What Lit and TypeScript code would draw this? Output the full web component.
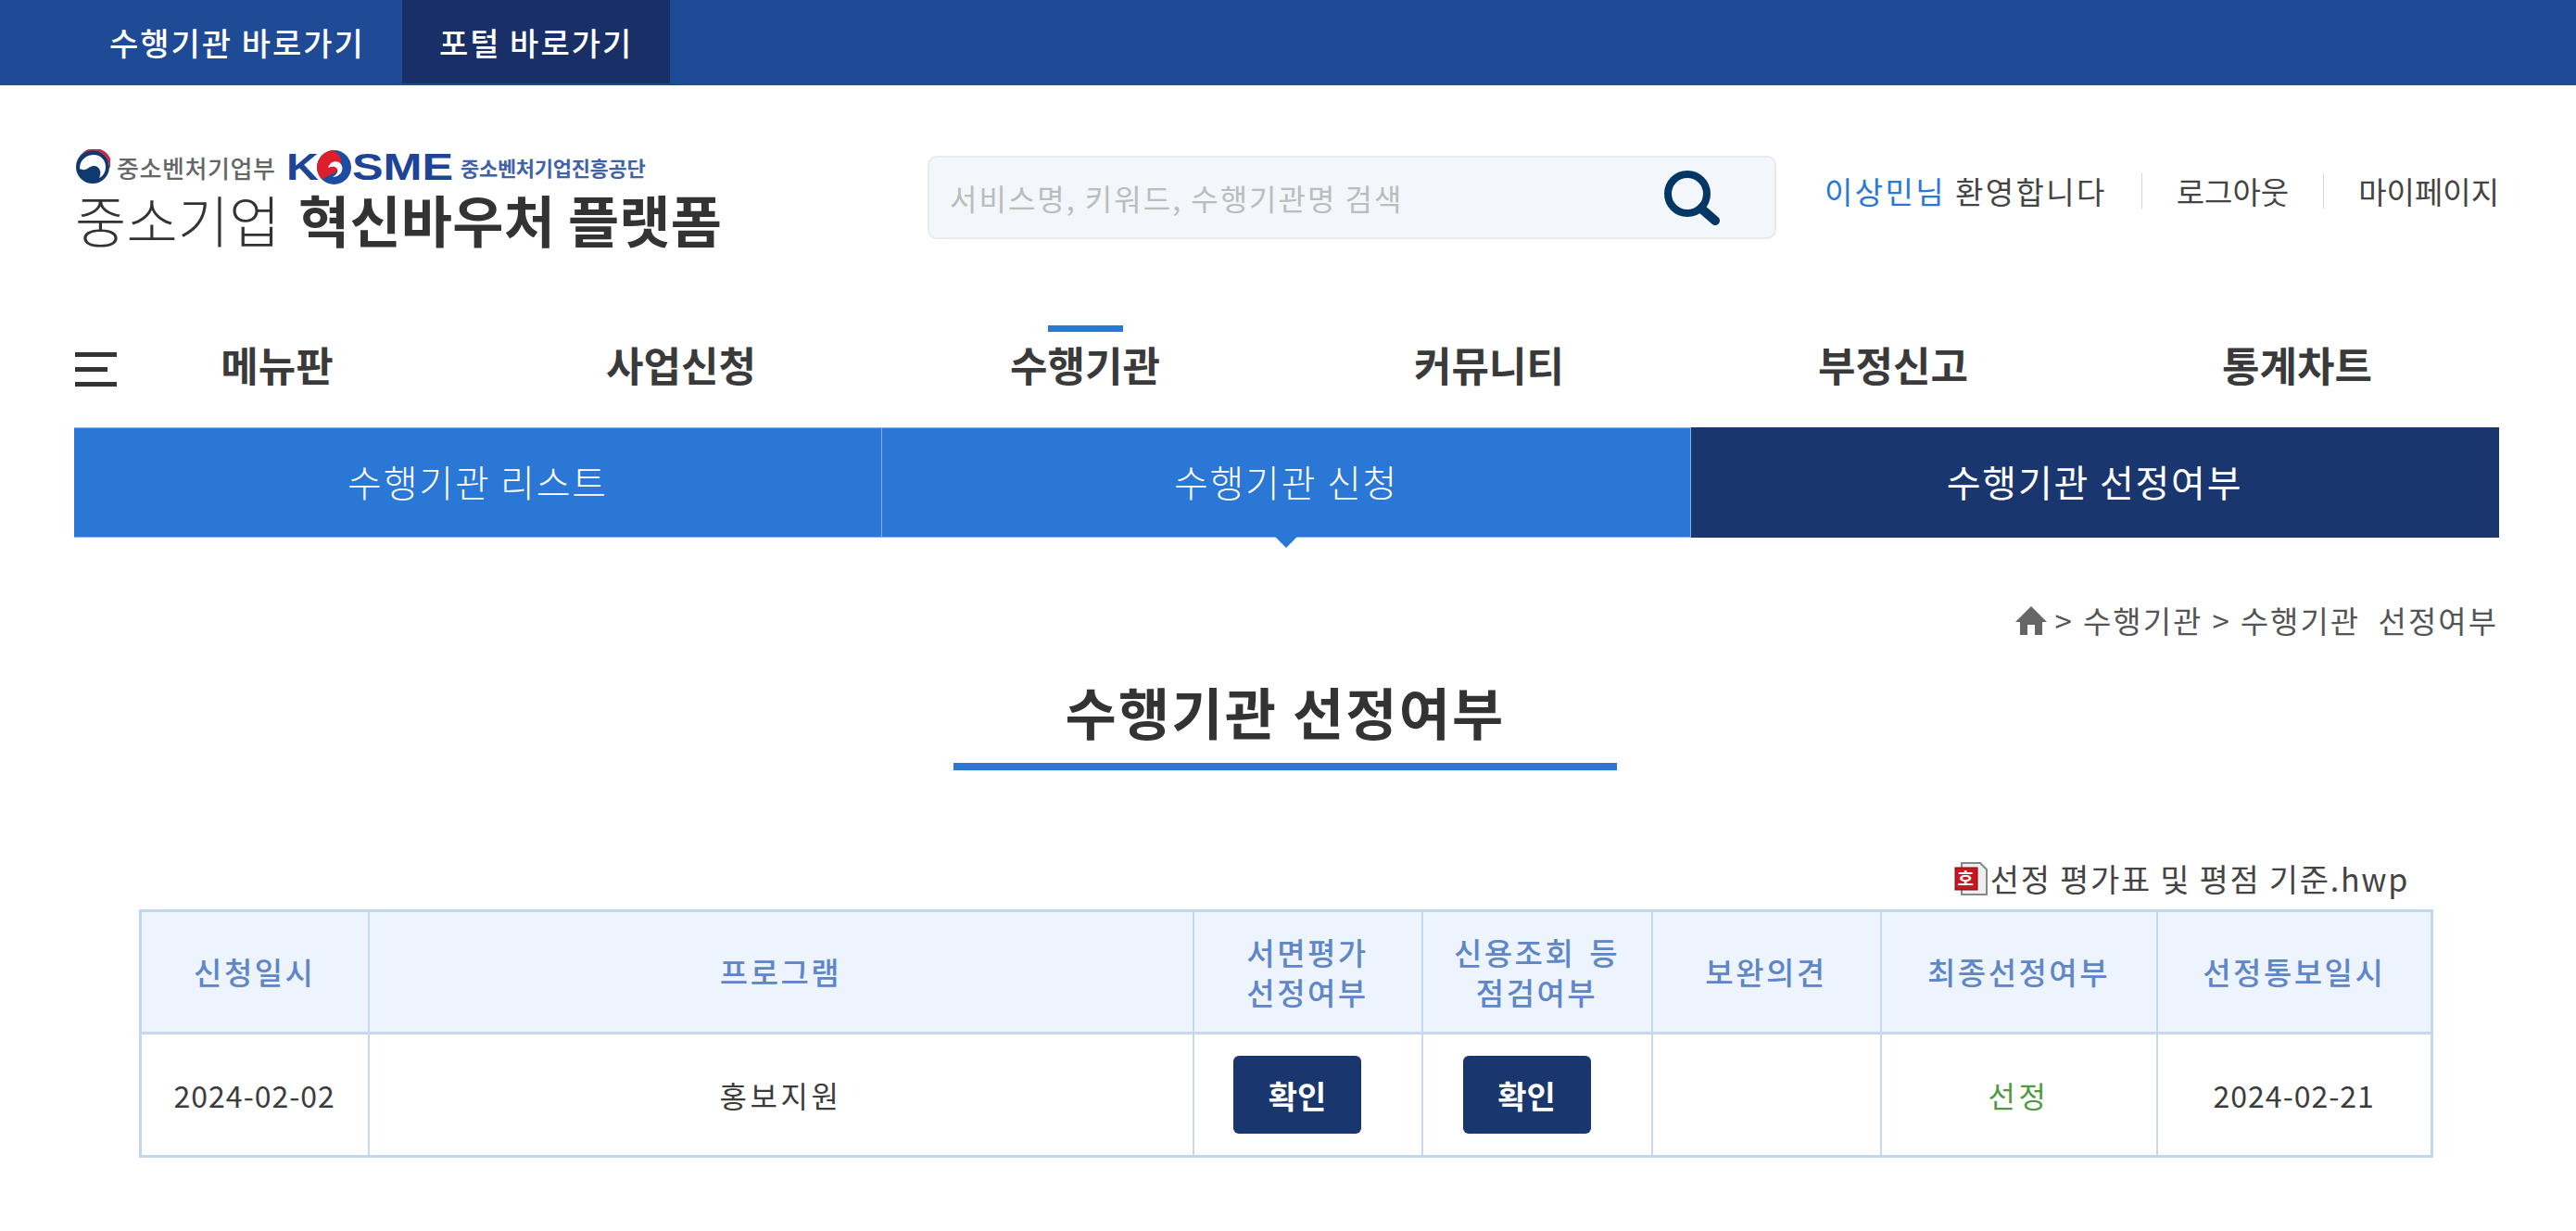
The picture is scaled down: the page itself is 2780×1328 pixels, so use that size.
import { LitElement, css, html } from "lit";
import { customElement } from "lit/decorators.js";

const NAV = ["메뉴판", "사업신청", "수행기관", "커뮤니티", "부정신고", "통계차트"];
const HEADS = ["신청일시", "프로그램", "서면평가<br>선정여부", "신용조회 등<br>점검여부", "보완의견", "최종선정여부", "선정통보일시"];
const COLS = [246, 890, 247, 248, 247, 298, 297];

@customElement("app-root")
export class AppRoot extends LitElement {
  static styles = css`
    :host {
      display: block;
      width: 2780px;
      height: 1328px;
      overflow: hidden;
      background: #fff;
      color: #333;
      font-family: "Noto Sans CJK KR", "Noto Sans", sans-serif;
    }
    .topbar {
      display: flex;
      height: 92px;
      padding-left: 78px;
      background: #1e4a96;
      box-sizing: border-box;
    }
    .topbar a {
      display: flex;
      align-items: center;
      height: 90px;
      padding: 0 40px;
      color: #fff;
      font-size: 34px;
      letter-spacing: 2px;
      font-weight: 500;
    }
    .topbar a.on {
      background: #182f67;
    }
    .head {
      display: flex;
      height: 228px;
      padding: 68px 83px 0 81px;
      box-sizing: border-box;
    }
    .logo {
      width: 920px;
      flex: none;
    }
    .orgs {
      display: flex;
      align-items: center;
      height: 40px;
    }
    .orgs .min {
      margin-left: 7px;
      font-size: 26px;
      letter-spacing: 0.6px;
      color: #666;
      font-weight: 500;
      width: 183px;
    }
    .kosme {
      display: flex;
      align-items: center;
      width: 188px;
      color: #1d4496;
      font-family: "Liberation Sans", sans-serif;
      font-size: 40px;
      font-weight: 700;
      line-height: 40px;
    }
    .kosme span {
      display: inline-block;
      transform-origin: left center;
    }
    .kosme .k {
      transform: scaleX(1.2);
      width: 33px;
    }
    .kosme .s {
      transform: scaleX(1.26);
    }
    .kosme svg {
      flex: none;
      margin-right: 1px;
    }
    .orgs .fund {
      font-size: 22px;
      letter-spacing: -0.3px;
      font-weight: 700;
      color: #3f62a9;
    }
    .brand {
      margin-top: 2px;
      font-size: 60px;
      line-height: 68px;
      font-weight: 300;
      letter-spacing: 0.2px;
      white-space: nowrap;
    }
    .brand b {
      font-weight: 700;
      margin-left: 6px;
    }
    .search {
      display: flex;
      align-items: center;
      justify-content: space-between;
      width: 916px;
      height: 90px;
      margin-top: 8px;
      padding: 0 58px 0 22px;
      box-sizing: border-box;
      flex: none;
      background: #f3f6fb;
      border: 2px solid #e8eaee;
      border-radius: 10px;
      color: #bcbcbc;
      font-size: 32px;
      letter-spacing: 2px;
    }
    .user {
      display: flex;
      align-items: center;
      margin-left: auto;
      height: 40px;
      margin-top: 26px;
      font-size: 33px;
      color: #444;
      white-space: nowrap;
    }
    .user .hello {
      letter-spacing: 2.4px;
    }
    .user em {
      font-style: normal;
      color: #2a77d6;
    }
    .user i {
      width: 1px;
      height: 38px;
      margin: 0 37px;
      background: #d5d5d5;
    }
    .nav {
      display: grid;
      grid-template-columns: repeat(6, 1fr);
      height: 141px;
      padding: 0 83px 0 81px;
    }
    .cell {
      display: flex;
      flex-direction: column;
      align-items: center;
      padding-top: 31px;
      font-size: 44px;
      font-weight: 700;
      color: #3a3a3a;
    }
    .mark {
      width: 81px;
      height: 7px;
      margin-bottom: 10px;
    }
    .mark.on {
      background: #2a77d6;
    }
    .label {
      display: grid;
      grid-template-columns: 1fr auto 1fr;
      align-items: center;
      justify-items: center;
      width: 100%;
      height: 50px;
      line-height: 50px;
    }
    .label span {
      grid-column: 2;
    }
    .burger {
      grid-column: 1;
      grid-row: 1;
      justify-self: start;
      display: flex;
      flex-direction: column;
      gap: 11px;
      width: 45px;
      margin-top: 10px;
    }
    .burger i {
      display: block;
      height: 5px;
      background: #333;
    }
    .burger i:nth-child(2) {
      width: 35px;
    }
    .tabs {
      display: grid;
      grid-template-columns: 872px 873px 872px;
      height: 119px;
      margin: 0 83px 0 80px;
    }
    .tabs a {
      position: relative;
      display: flex;
      align-items: center;
      justify-content: center;
      padding-bottom: 4px;
      box-sizing: border-box;
      background: #2a77d6;
      color: #fff;
      font-size: 40px;
      letter-spacing: 1.8px;
      font-weight: 300;
      border: solid #7fb2ee;
      border-width: 1px 1px 1px 0;
    }
    .tabs a.on {
      background: #19366e;
      border-color: #19366e;
      font-weight: 400;
    }
    .tabs a.caret::after {
      content: "";
      position: absolute;
      left: 50%;
      top: 100%;
      margin-left: -12px;
      border: 12px solid transparent;
      border-top-color: #2a77d6;
      border-bottom: 0;
    }
    .crumbs {
      display: flex;
      align-items: center;
      justify-content: flex-end;
      gap: 10px;
      height: 40px;
      margin-top: 69px;
      padding-right: 84px;
      font-size: 33px;
      letter-spacing: 2px;
      word-spacing: 10px;
      color: #555;
    }
    .crumbs svg {
      margin-right: -1px;
    }
    .title {
      width: 716px;
      margin: 41px 0 0 1029px;
      padding-bottom: 19px;
      border-bottom: 8px solid #2a77d6;
      text-align: center;
      font-size: 60px;
      letter-spacing: 2.2px;
      line-height: 74px;
      font-weight: 700;
      color: #333;
    }
    .file {
      display: flex;
      align-items: center;
      justify-content: flex-end;
      gap: 2px;
      height: 40px;
      margin-top: 96px;
      padding-right: 180px;
      font-size: 34px;
      letter-spacing: 1.7px;
      color: #444;
    }
    table {
      width: 2473px;
      margin: 14px 0 0 150px;
      border-collapse: collapse;
      table-layout: fixed;
      border: 3px solid #c2d6ef;
      font-size: 32px;
      letter-spacing: 1px;
    }
    th,
    td {
      padding: 0;
      border: 2px solid #c6d9f1;
      text-align: center;
    }
    th {
      height: 129px;
      background: #edf4fd;
      color: #5e86c8;
      font-size: 33px;
      letter-spacing: 2.5px;
      word-spacing: 5px;
      font-weight: 500;
      line-height: 43px;
      border-bottom-width: 3px;
    }
    td {
      height: 130px;
      color: #3c3c3c;
    }
    td.k {
      letter-spacing: 3.5px;
    }
    .btn {
      display: inline-flex;
      align-items: center;
      justify-content: center;
      width: 138px;
      height: 84px;
      margin-right: 22px;
      border-radius: 6px;
      background: #19366e;
      color: #fff;
      font-size: 34px;
      letter-spacing: 0;
      font-weight: 700;
      vertical-align: middle;
    }
    td.ok {
      color: #4f9a41;
    }
  `;

  render() {
    return html`
      <div class="topbar">
        <a>수행기관 바로가기</a>
        <a class="on">포털 바로가기</a>
      </div>
      <div class="head">
        <div class="logo">
          <div class="orgs">
            <svg width="38" height="38" viewBox="0 0 38 38">
              <circle cx="19" cy="19" r="18" fill="#0f3a70" />
              <path d="M2 19A17 17 0 0 1 36 19A17 17 0 0 0 2 19" fill="#fff" />
              <path d="M5 8A18 18 0 0 1 37 21A17 15 0 0 0 5 8" fill="#c9283e" />
              <path
                d="M5 21C5 10 14 6 20 6C28 6 33 12 33 19C33 25 30 29 26 31C29 25 27 19 21 18C15 17 13 25 5 21"
                fill="#fff"
              />
            </svg>
            <span class="min">중소벤처기업부</span>
            <div class="kosme">
              <span class="k">K</span>
              <svg width="37" height="37" viewBox="0 0 37 37">
                <circle cx="18.5" cy="18.5" r="18.5" fill="#1d4da3" />
                <path d="M18 0A18.5 18.5 0 0 0 6 32C12 26 24 26 26 14C27 8 23 3 18 0" fill="#dc1e2d" />
                <path d="M12 19C15 10 25 11 27 17C29 23 24 29 17 29C22 26 24 22 21 19C18 17 15 18 12 19" fill="#fff" />
              </svg>
              <span class="s">SME</span>
            </div>
            <span class="fund">중소벤처기업진흥공단</span>
          </div>
          <div class="brand">중소기업 <b>혁신바우처 플랫폼</b></div>
        </div>
        <div class="search">
          <span>서비스명, 키워드, 수행기관명 검색</span>
          <svg width="62" height="60" viewBox="0 0 62 60" fill="none" stroke="#003764">
            <circle cx="26" cy="26" r="21" stroke-width="8" />
            <path d="M41 42L56 55" stroke-width="10" stroke-linecap="round" />
          </svg>
        </div>
        <div class="user">
          <span class="hello"><em>이상민님</em> 환영합니다</span>
          <i></i>
          <span>로그아웃</span>
          <i></i>
          <span>마이페이지</span>
        </div>
      </div>
      <div class="nav">
        ${NAV.map(
          (n, i) => html`
            <div class="cell">
              <div class="mark ${i === 2 ? "on" : ""}"></div>
              <div class="label">
                ${i === 0 ? html`<div class="burger"><i></i><i></i><i></i></div>` : ""}
                <span>${n}</span>
              </div>
            </div>
          `
        )}
      </div>
      <div class="tabs">
        <a>수행기관 리스트</a>
        <a class="caret">수행기관 신청</a>
        <a class="on">수행기관 선정여부</a>
      </div>
      <div class="crumbs">
        <svg width="34" height="31" viewBox="0 0 34 31" fill="#666">
          <path d="M17 0L34 17L29 17L29 31L21 31L21 20L13 20L13 31L5 31L5 17L0 17Z" />
        </svg>
        <span>&gt;</span><span>수행기관</span><span>&gt;</span><span>수행기관 선정여부</span>
      </div>
      <div class="title">수행기관 선정여부</div>
      <div class="file">
        <svg width="37" height="37" viewBox="0 0 37 37">
          <path d="M8 2H28L35 9V36H8Z" fill="#eee" stroke="#888" stroke-width="2" />
          <rect x="1" y="7" width="24" height="24" fill="#c8171e" stroke="#7a1015" />
          <text x="13" y="26" text-anchor="middle" font-size="19" font-weight="700" fill="#fff">호</text>
        </svg>
        <span>선정 평가표 및 평점 기준.hwp</span>
      </div>
      <table>
        <colgroup>
          ${COLS.map((w) => html`<col style="width:${w}px" />`)}
        </colgroup>
        <tr>
          ${HEADS.map((h) => {
            const parts = h.split("<br>");
            return html`<th>${parts[0]}${parts[1] ? html`<br />${parts[1]}` : ""}</th>`;
          })}
        </tr>
        <tr>
          <td>2024-02-02</td>
          <td class="k">홍보지원</td>
          <td><span class="btn">확인</span></td>
          <td><span class="btn">확인</span></td>
          <td></td>
          <td class="k ok">선정</td>
          <td>2024-02-21</td>
        </tr>
      </table>
    `;
  }
}
